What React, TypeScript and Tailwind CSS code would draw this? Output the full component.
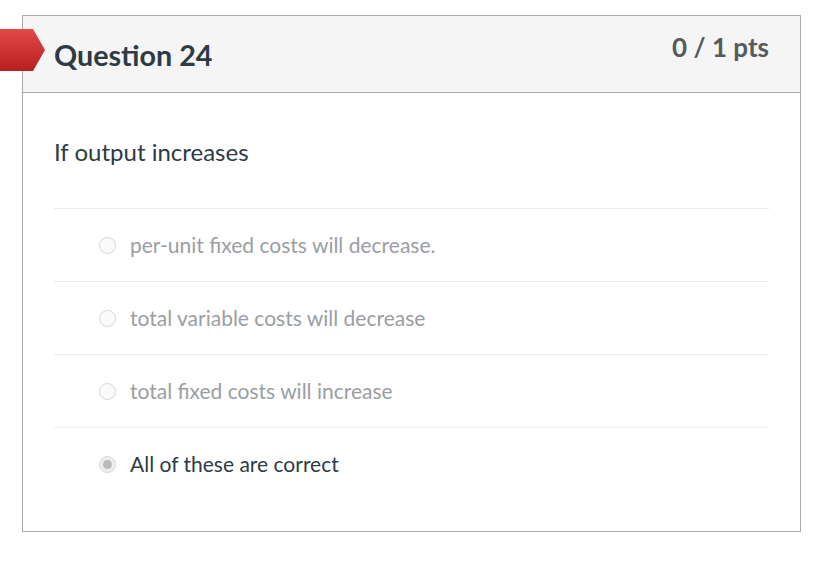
import React from "react";

const options = [
  { text: "per-unit fixed costs will decrease.", selected: false },
  { text: "total variable costs will decrease", selected: false },
  { text: "total fixed costs will increase", selected: false },
  { text: "All of these are correct", selected: true },
];

export default function App() {
  return (
    <div className="w-[828px] h-[562px] bg-white relative pt-[15px] pl-[22px]" style={{ fontFamily: "Lato, 'Open Sans', sans-serif" }}>
      <div className="w-[779px] h-[517px] border border-[#aaaaaa] flex flex-col">
        <div className="h-[77px] bg-[#f5f5f5] border-b border-[#aaaaaa] flex justify-between px-[31px]">
          <div className="flex items-center h-full">
            <h2 className="text-[28.7px] font-bold text-[#2d3b45] leading-none mt-[2px]">Question 24</h2>
          </div>
          <div className="pt-[18px] text-[26px] font-bold text-[#555a5e] leading-none">0 / 1 pts</div>
        </div>
        <div className="px-[31px] flex flex-col">
          <div className="h-[115px] flex items-center text-[24px] text-[#2d3b45] pt-[2px]">If output increases</div>
          {options.map((o, i) => (
            <div key={i} className="h-[73px] border-t border-[#e8eaec] flex items-center pl-[45px]">
              <span className={"w-[17px] h-[17px] rounded-full border border-[#d6d6d6] flex items-center justify-center shrink-0 " + (o.selected ? "bg-[#eeeeee]" : "bg-[#fafafa]")}>
                {o.selected && <span className="w-[9px] h-[9px] rounded-full bg-[#b9b9b9]" />}
              </span>
              <span className={"ml-[14px] text-[21px] " + (o.selected ? "text-[#2d3b45]" : "text-[#9a9ea2]")}>{o.text}</span>
            </div>
          ))}
        </div>
      </div>
      <svg className="absolute left-0 top-[29px]" width="46" height="42" viewBox="0 0 46 42">
        <defs>
          <linearGradient id="rg" x1="0" y1="0" x2="0" y2="1">
            <stop offset="0" stopColor="#e44848" />
            <stop offset="1" stopColor="#b71e1e" />
          </linearGradient>
        </defs>
        <polygon points="0,0 33,0 45,21 33,42 0,42" fill="url(#rg)" />
      </svg>
    </div>
  );
}
